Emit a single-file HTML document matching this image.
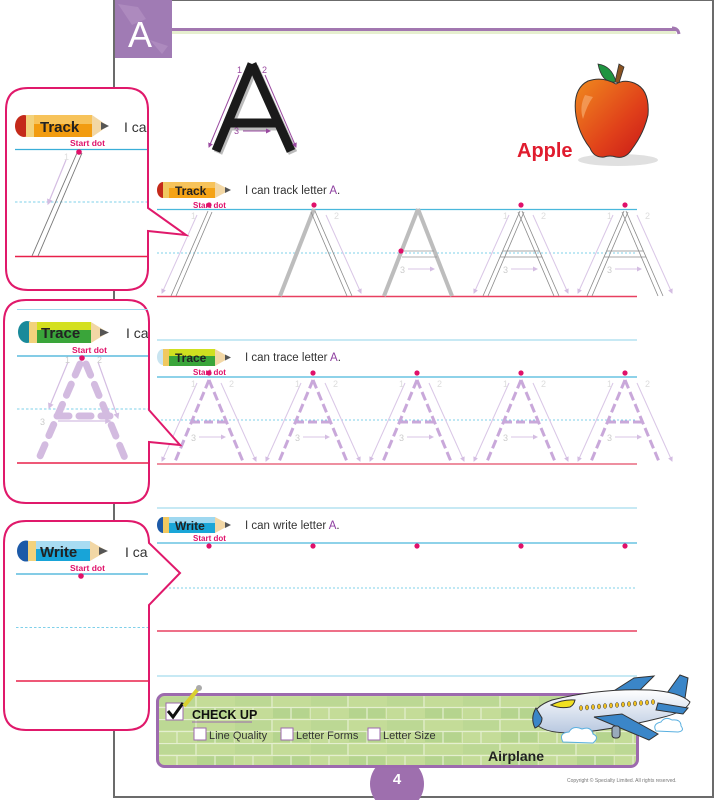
<!DOCTYPE html>
<html><head><meta charset="utf-8"><style>
html,body{margin:0;padding:0;background:#fff;width:717px;height:800px;overflow:hidden}
svg{display:block}
text{font-family:"Liberation Sans",sans-serif}
</style></head><body>
<svg width="717" height="800" viewBox="0 0 717 800" xmlns="http://www.w3.org/2000/svg">
<defs>
<marker id="ar" viewBox="0 0 10 10" refX="8" refY="5" markerWidth="5" markerHeight="5" orient="auto"><path d="M0,0L10,5L0,10z" fill="#d4bde2"/></marker>
<marker id="arp" viewBox="0 0 10 10" refX="8" refY="5" markerWidth="5" markerHeight="5" orient="auto"><path d="M0,0L10,5L0,10z" fill="#9a4aa0"/></marker>
<pattern id="brick" x="158" y="695" width="76" height="24" patternUnits="userSpaceOnUse">
<rect width="76" height="24" fill="#c4dc98"/>
<rect x="1" y="1" width="36" height="10" fill="#bcd894"/><rect x="39" y="13" width="36" height="10" fill="#b5d48e"/>
<path d="M0,0.5H76M0,12.5H76M38,0V12M0,12V24M57,12V24M19,12V24" stroke="#e4efcf" stroke-width="1.2" fill="none"/>
</pattern>
<g id="arr1"><line x1="-12" y1="6" x2="-47" y2="84" stroke="#d9c6e6" stroke-width="1" marker-end="url(#ar)"/><text x="-18" y="10" font-size="9" fill="#ddd">1</text></g>
<g id="arr2"><line x1="12" y1="6" x2="47" y2="84" stroke="#d9c6e6" stroke-width="1" marker-end="url(#ar)"/><text x="20" y="10" font-size="9" fill="#ddd">2</text></g>
<g id="arr3"><line x1="-10" y1="60" x2="16" y2="60" stroke="#d9c6e6" stroke-width="1" marker-end="url(#ar)"/><text x="-18" y="64" font-size="9" fill="#ccc">3</text></g>
<g id="L2" stroke="#8a8a8a" stroke-width="0.8" fill="none"><line x1="-1" y1="2" x2="-38" y2="87"/><line x1="3" y1="3" x2="-33" y2="87"/></g>
<g id="R2" stroke="#8a8a8a" stroke-width="0.8" fill="none"><line x1="-3" y1="3" x2="33" y2="87"/><line x1="1" y1="2" x2="38" y2="87"/></g>
<g id="C2" stroke="#8a8a8a" stroke-width="0.8"><line x1="-18" y1="42" x2="18" y2="42"/><line x1="-21" y1="48" x2="21" y2="48"/></g>
<g id="Ls"><line x1="0" y1="0" x2="-34" y2="87" stroke="#bdbdbd" stroke-width="4"/></g>
<g id="Rs"><line x1="0" y1="0" x2="34" y2="87" stroke="#bdbdbd" stroke-width="4"/></g>
<g id="trace"><use href="#arr1"/><use href="#arr2"/><use href="#arr3"/>
<g stroke="#c9a8da" stroke-width="3" stroke-dasharray="9 4" fill="none"><line x1="0" y1="3" x2="-35" y2="87"/><line x1="0" y1="3" x2="35" y2="87"/><line x1="-18" y1="45" x2="18" y2="45"/></g>
<circle cx="0" cy="-4" r="2.6" fill="#e0116a"/></g>
<g id="dot"><circle cx="0" cy="-4" r="2.6" fill="#e0116a"/></g>
<clipPath id="cp1"><rect x="8" y="90" width="139" height="198"/></clipPath>
<clipPath id="cp2"><rect x="6" y="302" width="142" height="199"/></clipPath>
<clipPath id="cp3"><rect x="6" y="523" width="142" height="205"/></clipPath>
<linearGradient id="appleg" x1="0" y1="0" x2="1" y2="1"><stop offset="0" stop-color="#f08a1e"/><stop offset="0.6" stop-color="#e0401a"/><stop offset="1" stop-color="#c81818"/></linearGradient>
<linearGradient id="planeg" x1="0" y1="0" x2="0" y2="1"><stop offset="0" stop-color="#ffffff"/><stop offset="1" stop-color="#b8c8e0"/></linearGradient>
</defs>

<rect x="114" y="0" width="599" height="797" fill="#fff" stroke="#6b6b6b" stroke-width="2"/>
<rect x="115" y="0" width="57" height="58" fill="#a07bb4"/>
<path d="M118,4 l20,3 l8,12 l-14,6z M150,40 l18,6 l-6,8z" fill="#b595c5" opacity="0.6"/>
<text x="128" y="47" font-size="36" fill="#fff">A</text>
<rect x="172" y="28" width="504" height="3" fill="#a277b0"/>
<rect x="172" y="31" width="504" height="3" fill="#e6efcf"/>
<path d="M672,28 q6,0 7,6" stroke="#a277b0" stroke-width="3" fill="none"/>

<!-- big A -->
<g stroke="#bbb" stroke-width="9"><line x1="254" y1="67" x2="218" y2="153"/><line x1="254" y1="67" x2="293" y2="153"/><line x1="232" y1="126" x2="280" y2="126"/></g>
<g stroke="#1a1a1a" stroke-width="9"><line x1="252" y1="64" x2="216" y2="151"/><line x1="252" y1="64" x2="291" y2="151"/><line x1="230" y1="123" x2="277" y2="123"/></g>
<g stroke="#9a4aa0" stroke-width="1" fill="none"><line x1="239" y1="75" x2="209" y2="147" marker-end="url(#arp)"/><line x1="265" y1="75" x2="296" y2="147" marker-end="url(#arp)"/><line x1="243" y1="131" x2="270" y2="131" marker-end="url(#arp)"/></g>
<text x="237" y="73" font-size="9" fill="#9a4aa0">1</text><text x="262" y="73" font-size="9" fill="#9a4aa0">2</text><text x="234" y="134" font-size="9" fill="#9a4aa0">3</text>

<!-- apple -->
<ellipse cx="618" cy="160" rx="40" ry="6" fill="#ccc" opacity="0.6"/>
<path d="M598,64 q14,2 18,18 q-14,2 -18,-18z" fill="#1e9440" stroke="#333" stroke-width="0.8"/>
<path d="M615,82 l4,-18 l5,3 l-5,16z" fill="#8a5220" stroke="#333" stroke-width="0.8"/>
<path d="M616,84 q-14,-8 -28,-3 q-16,8 -12,35 q3,18 14,32 q4,10 14,9 q6,-2 12,0 q10,2 16,-8 q12,-16 16,-34 q2,-26 -14,-32 q-10,-4 -18,1z" fill="url(#appleg)" stroke="#333" stroke-width="1"/>
<path d="M585,95 q-6,12 -2,24 q4,-14 10,-22z" fill="#f4a060" opacity="0.8"/>
<text x="517" y="157" font-size="20" font-weight="bold" fill="#e01c2e">Apple</text>

<!-- TRACK row -->
<ellipse cx="163" cy="190" rx="6" ry="8" fill="#c42a1a"/>
<rect x="163" y="182" width="6" height="16" fill="#f0c860"/>
<rect x="169" y="182" width="46" height="16" fill="#f5a315"/><rect x="169" y="182" width="46" height="6" fill="#f7c35a"/>
<path d="M215,182 L230,190 L215,198z" fill="#f2d7a5"/><path d="M225,187 L231,190 L225,193z" fill="#555"/>
<text x="175" y="195" font-size="12" font-weight="bold" fill="#222">Track</text>
<text x="245" y="194" font-size="11.5" fill="#333">I can track letter <tspan fill="#8e3fa0">A</tspan>.</text>
<text x="193" y="208" font-size="8" font-weight="bold" fill="#e0116a">Start dot</text>
<line x1="157" y1="209.5" x2="637" y2="209.5" stroke="#4ab8dc" stroke-width="1.2"/>
<line x1="157" y1="253" x2="637" y2="253" stroke="#7fd0ea" stroke-width="1" stroke-dasharray="2 2"/>
<line x1="157" y1="296.5" x2="637" y2="296.5" stroke="#e84060" stroke-width="1.5"/>
<g transform="translate(209,209)"><use href="#arr1"/><use href="#L2"/><use href="#dot"/></g>
<g transform="translate(314,209)"><use href="#Ls"/><use href="#arr2"/><use href="#R2"/><use href="#dot"/></g>
<g transform="translate(418,209)"><use href="#Ls"/><use href="#Rs"/><use href="#arr3"/><g stroke="#999" stroke-width="0.8"><line x1="-14" y1="42" x2="16" y2="42"/><line x1="-16" y1="48" x2="19" y2="48"/></g><circle cx="-17" cy="42" r="2.6" fill="#e0116a"/></g>
<g transform="translate(521,209)"><use href="#arr1"/><use href="#arr2"/><use href="#arr3"/><use href="#L2"/><use href="#R2"/><use href="#C2"/><use href="#dot"/></g>
<g transform="translate(625,209)"><use href="#arr1"/><use href="#arr2"/><use href="#arr3"/><use href="#L2"/><use href="#R2"/><use href="#C2"/><use href="#dot"/></g>

<line x1="157" y1="340" x2="637" y2="340" stroke="#8fd3ea" stroke-width="1"/>

<!-- TRACE row -->
<ellipse cx="163" cy="357" rx="6" ry="8" fill="#c9e4f0"/>
<rect x="163" y="349" width="6" height="17" fill="#f0c860"/>
<rect x="169" y="349" width="46" height="17" fill="#3aa53a"/><rect x="169" y="349" width="46" height="7" fill="#cfe020"/>
<path d="M215,349 L230,357.5 L215,366z" fill="#f2d7a5"/><path d="M225,354.5 L231,357.5 L225,360.5z" fill="#555"/>
<text x="175" y="362" font-size="12" font-weight="bold" fill="#222">Trace</text>
<text x="245" y="361" font-size="11.5" fill="#333">I can trace letter <tspan fill="#8e3fa0">A</tspan>.</text>
<text x="193" y="375" font-size="8" font-weight="bold" fill="#e0116a">Start dot</text>
<line x1="157" y1="377" x2="637" y2="377" stroke="#4ab8dc" stroke-width="1.2"/>
<line x1="157" y1="420" x2="637" y2="420" stroke="#7fd0ea" stroke-width="1" stroke-dasharray="2 2"/>
<line x1="157" y1="464" x2="637" y2="464" stroke="#e86a80" stroke-width="1.5"/>
<g transform="translate(209,377)"><use href="#trace"/></g>
<g transform="translate(313,377)"><use href="#trace"/></g>
<g transform="translate(417,377)"><use href="#trace"/></g>
<g transform="translate(521,377)"><use href="#trace"/></g>
<g transform="translate(625,377)"><use href="#trace"/></g>

<line x1="157" y1="508" x2="637" y2="508" stroke="#8fd3ea" stroke-width="1"/>

<!-- WRITE row -->
<ellipse cx="163" cy="525" rx="6" ry="8" fill="#1c5aa8"/>
<rect x="163" y="517" width="6" height="16" fill="#f0c860"/>
<rect x="169" y="517" width="46" height="16" fill="#1aa6d8"/><rect x="169" y="517" width="46" height="6" fill="#9fd8f0"/>
<path d="M215,517 L230,525 L215,533z" fill="#f2d7a5"/><path d="M225,522 L231,525 L225,528z" fill="#555"/>
<text x="175" y="530" font-size="12" font-weight="bold" fill="#222">Write</text>
<text x="245" y="529" font-size="11.5" fill="#333">I can write letter <tspan fill="#8e3fa0">A</tspan>.</text>
<text x="193" y="541" font-size="8" font-weight="bold" fill="#e0116a">Start dot</text>
<line x1="157" y1="543" x2="637" y2="543" stroke="#4ab8dc" stroke-width="1.2"/>
<line x1="157" y1="588" x2="637" y2="588" stroke="#7fd0ea" stroke-width="1" stroke-dasharray="2 2"/>
<line x1="157" y1="631" x2="637" y2="631" stroke="#e84060" stroke-width="1.5"/>
<line x1="157" y1="676" x2="637" y2="676" stroke="#8fd3ea" stroke-width="1"/>
<g fill="#e0116a"><circle cx="209" cy="546" r="2.6"/><circle cx="313" cy="546" r="2.6"/><circle cx="417" cy="546" r="2.6"/><circle cx="521" cy="546" r="2.6"/><circle cx="625" cy="546" r="2.6"/></g>

<!-- page number -->
<circle cx="397" cy="784" r="27" fill="#9e6fae"/>
<text x="397" y="784" font-size="15" font-weight="bold" fill="#fff" text-anchor="middle">4</text>
<!-- checkup -->
<rect x="157.5" y="694.5" width="480" height="72" rx="7" fill="url(#brick)" stroke="#9d6aae" stroke-width="3"/>
<rect x="166" y="703" width="17" height="17" fill="#fff" stroke="#9d6aae" stroke-width="1"/>
<path d="M168,711 l5,6 l10,-14" stroke="#111" stroke-width="3" fill="none"/>
<path d="M184,706 l14,-17" stroke="#d9d030" stroke-width="4"/><circle cx="199" cy="688" r="3" fill="#aaa"/>
<text x="192" y="719" font-size="12.5" font-weight="bold" fill="#111">CHECK UP</text>
<line x1="192" y1="722" x2="252" y2="722" stroke="#9d6aae" stroke-width="1"/>
<g fill="#fff" stroke="#9d6aae" stroke-width="1"><rect x="194" y="728" width="12" height="12"/><rect x="281" y="728" width="12" height="12"/><rect x="368" y="728" width="12" height="12"/></g>
<g font-size="11" fill="#333"><text x="209" y="739">Line Quality</text><text x="296" y="739">Letter Forms</text><text x="383" y="739">Letter Size</text></g>
<text x="488" y="761" font-size="14" font-weight="bold" fill="#222">Airplane</text>
<text x="567" y="782" font-size="5" fill="#777">Copyright © Specialty Limited. All rights reserved.</text>

<!-- airplane -->
<g stroke="#333" stroke-width="1">
<path d="M612,692 l22,-14 l20,-2 l-18,18z" fill="#3b86c8"/>
<path d="M662,700 l18,-25 l8,3 l-4,27z" fill="#3b86c8"/>
<path d="M534,722 Q530,708 552,700 Q600,688 650,690 Q680,692 690,702 Q686,712 660,718 Q620,728 585,732 Q545,736 534,722z" fill="url(#planeg)"/>
<path d="M536,708 q-6,10 -1,20 q7,-3 7,-10z" fill="#3b86c8"/>
<path d="M551,705 q12,-6 24,-5 q-1,5 -5,7 q-10,2 -19,-2z" fill="#f0e020"/>
<path d="M594,717 l28,-3 l36,20 l-9,6z" fill="#3b86c8"/>
<path d="M658,703 l30,5 l-5,6 l-27,-4z" fill="#3b86c8"/>
<rect x="612" y="726" width="8" height="12" rx="3" fill="#9ab"/>
</g>
<g fill="#f0c020" stroke="#333" stroke-width="0.5">
<ellipse cx="581" cy="708" rx="1.6" ry="2.5"/><ellipse cx="587" cy="707.5" rx="1.6" ry="2.5"/><ellipse cx="593" cy="707" rx="1.6" ry="2.5"/><ellipse cx="599" cy="706.5" rx="1.6" ry="2.5"/><ellipse cx="605" cy="706" rx="1.6" ry="2.5"/><ellipse cx="611" cy="705.5" rx="1.6" ry="2.5"/><ellipse cx="617" cy="705" rx="1.6" ry="2.5"/><ellipse cx="623" cy="704.5" rx="1.6" ry="2.5"/><ellipse cx="629" cy="704" rx="1.6" ry="2.5"/><ellipse cx="635" cy="703.5" rx="1.6" ry="2.5"/><ellipse cx="641" cy="703" rx="1.6" ry="2.5"/><ellipse cx="647" cy="702.5" rx="1.6" ry="2.5"/><ellipse cx="653" cy="702" rx="1.6" ry="2.5"/></g>
<g fill="#fff" stroke="#5ab0e0" stroke-width="1"><path d="M563,742 q-5,-9 6,-10 q4,-7 13,-3 q9,-3 11,5 q7,3 0,9z"/><path d="M656,731 q-4,-7 5,-9 q4,-6 11,-2 q9,-1 9,6 q4,5 -3,6z"/></g>

<!-- CALLOUT 1 -->
<path d="M28,88 H126 Q148,88 148,110 V208 L186,235 L148,231 V268 Q148,290 126,290 H28 Q6,290 6,268 V110 Q6,88 28,88Z" fill="#fff" stroke="#e0196b" stroke-width="2"/>
<g clip-path="url(#cp1)">
<ellipse cx="24" cy="126" rx="9" ry="11" fill="#c42a1a"/>
<rect x="26" y="115" width="8" height="22" fill="#f2d27c"/>
<rect x="34" y="115" width="58" height="22" fill="#f29c10"/><rect x="34" y="115" width="58" height="9" fill="#f7c35a"/>
<path d="M92,115 L108,126 L92,137z" fill="#f2d7a5"/><path d="M101,122 L109,126 L101,130z" fill="#555"/>
<text x="40" y="132" font-size="15" font-weight="bold" fill="#222">Track</text>
<text x="124" y="132" font-size="14" fill="#333">I ca</text>
<text x="70" y="146" font-size="8.5" font-weight="bold" fill="#e0116a">Start dot</text>
<line x1="15" y1="149.5" x2="148" y2="149.5" stroke="#3aaed8" stroke-width="1.3"/>
<line x1="15" y1="202" x2="148" y2="202" stroke="#7fd0ea" stroke-width="1" stroke-dasharray="2.5 2"/>
<line x1="15" y1="256.5" x2="148" y2="256.5" stroke="#e8204a" stroke-width="1.5"/>
<g stroke="#777" stroke-width="0.9"><line x1="77" y1="153" x2="32" y2="256"/><line x1="82" y1="153" x2="38" y2="256"/></g>
<line x1="66" y1="160" x2="48" y2="204" stroke="#d4bde2" stroke-width="1.2" marker-end="url(#ar)"/>
<text x="64" y="160" font-size="9" fill="#ddd">1</text>
<circle cx="79" cy="152" r="2.8" fill="#e0116a"/>
</g>

<!-- CALLOUT 2 -->
<path d="M26,300 H127 Q149,300 149,322 V410 L180,445 L149,442 V481 Q149,503 127,503 H26 Q4,503 4,481 V322 Q4,300 26,300Z" fill="#fff" stroke="#e0196b" stroke-width="2"/>
<g clip-path="url(#cp2)">
<line x1="17" y1="309.5" x2="148" y2="309.5" stroke="#9fd8ee" stroke-width="1"/>
<ellipse cx="27" cy="332" rx="9" ry="11" fill="#1a8a9a"/>
<rect x="29" y="322" width="8" height="21" fill="#f2d27c"/>
<rect x="37" y="322" width="54" height="21" fill="#3aa53a"/><rect x="37" y="322" width="54" height="8" fill="#d4e020"/>
<path d="M91,322 L108,332.5 L91,343z" fill="#f2d7a5"/><path d="M100,328.5 L109,332.5 L100,336.5z" fill="#555"/>
<text x="41" y="338" font-size="15" font-weight="bold" fill="#222">Trace</text>
<text x="126" y="338" font-size="14" fill="#333">I ca</text>
<text x="72" y="353" font-size="8.5" font-weight="bold" fill="#e0116a">Start dot</text>
<line x1="17" y1="356" x2="148" y2="356" stroke="#3aaed8" stroke-width="1.3"/>
<line x1="17" y1="409" x2="148" y2="409" stroke="#7fd0ea" stroke-width="1" stroke-dasharray="2.5 2"/>
<line x1="17" y1="463" x2="148" y2="463" stroke="#e8204a" stroke-width="1.5"/>
<g stroke="#d4bde2" stroke-width="1.2"><line x1="68" y1="362" x2="49" y2="408" marker-end="url(#ar)"/><line x1="98" y1="362" x2="118" y2="418" marker-end="url(#ar)"/><line x1="58" y1="421" x2="110" y2="421" marker-end="url(#ar)"/></g>
<g font-size="9" fill="#ccc"><text x="65" y="363">1</text><text x="97" y="363">2</text><text x="40" y="425">3</text></g>
<g stroke="#d3bbe0" stroke-width="7" stroke-linecap="round" stroke-dasharray="12 10" fill="none"><path d="M80,364 L37,463"/><path d="M86,364 L127,463"/><path d="M57,416 L110,416"/></g>
<circle cx="82" cy="358" r="2.8" fill="#e0116a"/>
</g>

<!-- CALLOUT 3 -->
<path d="M26,521 H127 Q149,521 149,543 L180,573 L149,605 V708 Q149,730 127,730 H26 Q4,730 4,708 V543 Q4,521 26,521Z" fill="#fff" stroke="#e0196b" stroke-width="2"/>
<g clip-path="url(#cp3)">
<ellipse cx="26" cy="551" rx="9" ry="10.5" fill="#1c5aa8"/>
<rect x="28" y="541" width="8" height="20" fill="#f2d27c"/>
<rect x="36" y="541" width="54" height="20" fill="#18a4d8"/><rect x="36" y="541" width="54" height="8" fill="#a8dcf2"/>
<path d="M90,541 L107,551 L90,561z" fill="#f2d7a5"/><path d="M99,547 L108,551 L99,555z" fill="#555"/>
<text x="40" y="557" font-size="15" font-weight="bold" fill="#222">Write</text>
<text x="125" y="557" font-size="14" fill="#333">I ca</text>
<text x="70" y="571" font-size="8.5" font-weight="bold" fill="#e0116a">Start dot</text>
<line x1="16" y1="574" x2="148" y2="574" stroke="#3aaed8" stroke-width="1.3"/>
<line x1="16" y1="627.5" x2="148" y2="627.5" stroke="#7fd0ea" stroke-width="1" stroke-dasharray="2.5 2"/>
<line x1="16" y1="681" x2="148" y2="681" stroke="#e8204a" stroke-width="1.5"/>
<circle cx="81" cy="576" r="2.8" fill="#e0116a"/>
</g>
</svg>
</body></html>
